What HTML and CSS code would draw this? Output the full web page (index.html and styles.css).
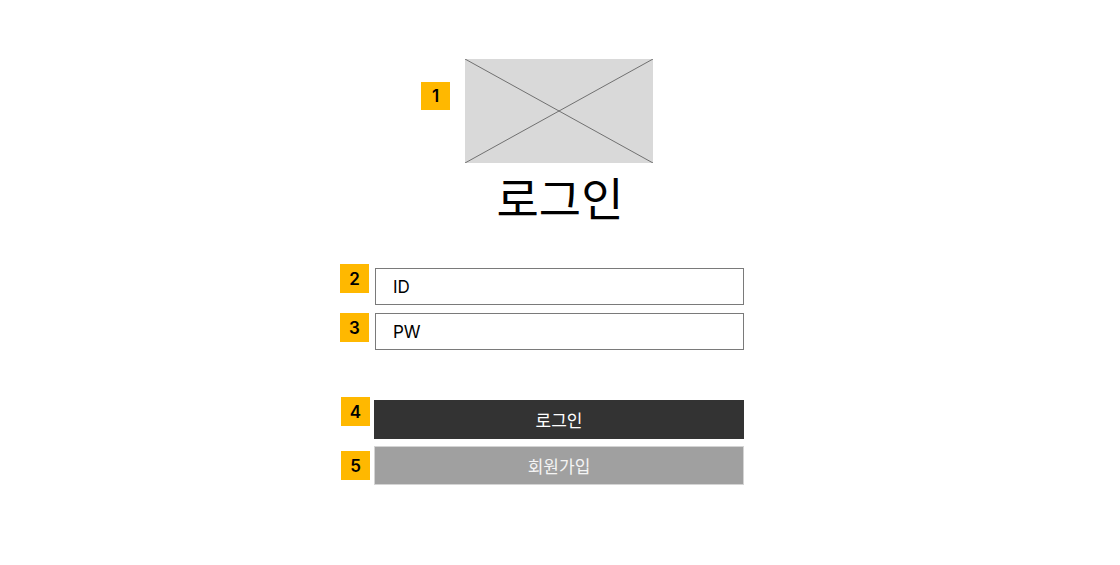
FILE: index.html
```html
<!DOCTYPE html>
<html lang="ko">
<head>
<meta charset="utf-8">
<title>로그인</title>
<link rel="stylesheet" href="styles.css">
</head>
<body>
<main class="page">
  <div class="logo-wrap">
    <span class="badge badge-logo">1</span>
    <div class="logo">
      <svg class="logo-x" width="188" height="104" viewBox="0 0 188 104" preserveAspectRatio="none">
        <line x1="0" y1="0" x2="188" y2="104" stroke="#555" stroke-width="0.8"/>
        <line x1="188" y1="0" x2="0" y2="104" stroke="#555" stroke-width="0.8"/>
      </svg>
    </div>
  </div>
  <h1 class="title">로그인</h1>
  <div class="form">
    <div class="field field-input">
      <span class="badge badge-id">2</span>
      <div class="input">ID</div>
    </div>
    <div class="field field-input">
      <span class="badge badge-pw">3</span>
      <div class="input">PW</div>
    </div>
    <div class="actions">
      <div class="field">
        <span class="badge badge-login">4</span>
        <button class="btn btn-login">로그인</button>
      </div>
      <div class="field">
        <span class="badge badge-join">5</span>
        <button class="btn btn-join">회원가입</button>
      </div>
    </div>
  </div>
</main>
</body>
</html>
```

FILE: styles.css
```css
* { box-sizing: border-box; }
html, body { margin: 0; padding: 0; background: #fff; }
body {
  font-family: Inter, "Noto Sans CJK KR", "Noto Sans", sans-serif;
  color: #000;
}
.page {
  display: flex;
  flex-direction: column;
  align-items: center;
  padding-top: 59px;
  width: 1120px;
  height: 565px;
}
.logo-wrap {
  position: relative;
  margin-left: -2px;
}
.logo {
  width: 188px;
  height: 104px;
  background: #d9d9d9;
}
.logo-x { display: block; }
.badge {
  position: absolute;
  width: 29px;
  height: 29px;
  background: #ffb800;
  color: #000;
  font-family: Inter, sans-serif;
  font-weight: 600;
  font-size: 17px;
  display: flex;
  align-items: center;
  justify-content: center;
}
.badge-logo { left: -44px; top: 23px; height: 28px; }
.title {
  margin: 0;
  font-family: "Noto Sans CJK KR", sans-serif;
  font-weight: 400;
  font-size: 46px;
  line-height: 66px;
}
.form {
  margin-top: 39px;
  margin-left: -2px;
  width: 370px;
  display: flex;
  flex-direction: column;
  gap: 8px;
}
.field { position: relative; }
.field-input { margin-left: 1px; }
.input {
  height: 37px;
  border: 1px solid #7a7a7a;
  padding-left: 17px;
  display: flex;
  align-items: center;
  font-size: 17px;
  font-family: Inter, sans-serif;
}
.badge-id { left: -35px; top: -4px; }
.badge-pw { left: -35px; top: 0; }
.actions {
  margin-top: 42px;
  display: flex;
  flex-direction: column;
  gap: 7px;
}
.btn {
  display: block;
  width: 370px;
  height: 39px;
  border: none;
  font-family: "Noto Sans CJK KR", sans-serif;
  font-size: 17px;
  color: #fff;
  padding: 0;
}
.btn-login { background: #333333; }
.btn-join { background: #a0a0a0; border: 1px solid #d4d4d4; color: #f4f4f4; }
.badge-login { left: -33px; top: -3px; }
.badge-join { left: -33px; top: 5px; }
```
